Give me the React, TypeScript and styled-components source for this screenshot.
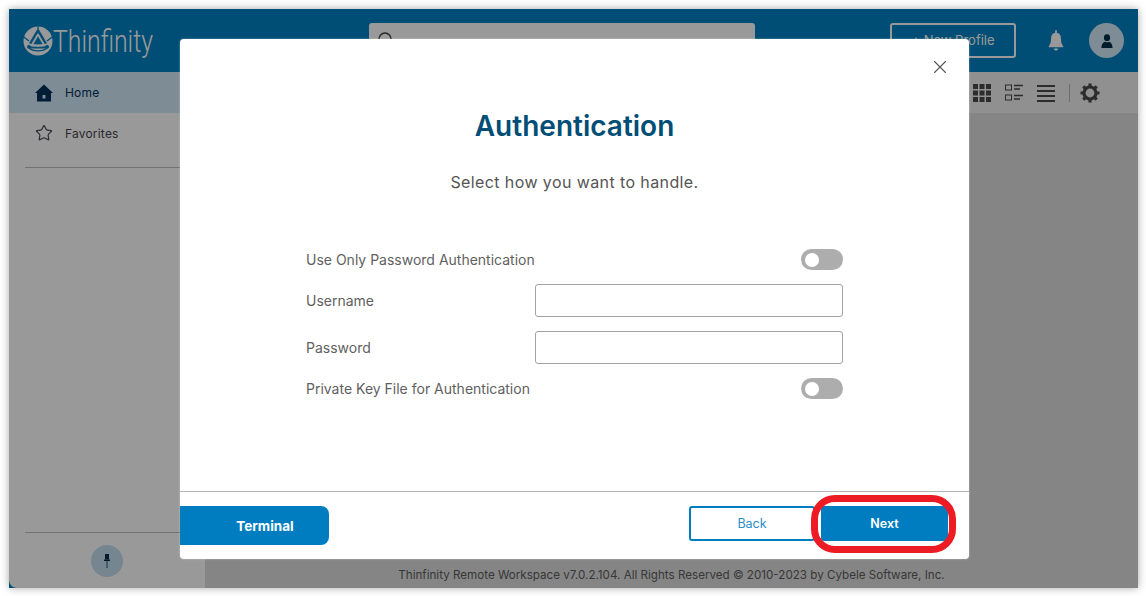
import React from 'react'
import styled, { createGlobalStyle } from 'styled-components'
import { Star, X } from 'lucide-react'

const GlobalStyle = createGlobalStyle`
  html, body {
    margin: 0;
    padding: 0;
    background: #fff;
    font-family: Inter, "Liberation Sans", sans-serif;
  }
  * {
    box-sizing: border-box;
  }
`

const Page = styled.div`
  width: 1146px;
  height: 596px;
  padding: 9px 8px 8px 9px;
  overflow: hidden;
`

const Window = styled.div`
  position: relative;
  display: flex;
  flex-direction: column;
  height: 579px;
  background: #0082c3;
  box-shadow: 0 0 8px rgba(0, 0, 0, 0.35);
  overflow: hidden;
`

const Header = styled.header`
  display: flex;
  align-items: center;
  flex: 0 0 63px;
  padding: 0 13px 0 14px;
  background: #0082c3;
`

const Brand = styled.div`
  display: flex;
  align-items: center;
  width: 346px;
  color: #fff;
`

const BrandName = styled.span`
  display: inline-block;
  font-family: Roboto, sans-serif;
  font-size: 32px;
  font-weight: 300;
  line-height: 36px;
  transform: scaleX(0.775);
  transform-origin: left center;
`

const Search = styled.div`
  display: flex;
  align-items: center;
  width: 386px;
  height: 34px;
  padding: 0 8px;
  margin-bottom: 1px;
  background: #fff;
  border-radius: 3px;
  color: #444;
`

const NewProfile = styled.button`
  width: 126px;
  height: 35px;
  margin-left: 135px;
  margin-top: -1px;
  background: none;
  border: 2px solid #fff;
  border-radius: 3px;
  color: #fff;
  font-family: inherit;
  font-size: 13px;
`

const Bell = styled.div`
  display: flex;
  margin-left: 32px;
  color: #fff;
`

const Avatar = styled.div`
  display: flex;
  align-items: center;
  justify-content: center;
  width: 35px;
  height: 35px;
  margin-left: 25px;
  border-radius: 50%;
  background: #d2e9fa;
  color: #00304a;
`

const Body = styled.div`
  display: flex;
  flex: 1;
  min-height: 0;
`

const Sidebar = styled.aside`
  display: flex;
  flex-direction: column;
  width: 196px;
  background: #fff;
  border-bottom-left-radius: 8px;
`

const NavItem = styled.div<{ active?: boolean }>`
  display: flex;
  align-items: center;
  gap: 12px;
  height: ${({ active }) => (active ? '41px' : '40px')};
  padding-left: 26px;
  background: ${({ active }) => (active ? '#d2e9fa' : 'transparent')};
  color: ${({ active }) => (active ? '#04325a' : '#4b4450')};
  font-size: 12px;
  letter-spacing: 0.2px;
`

const Divider = styled.hr<{ bottom?: boolean }>`
  width: 171px;
  margin: ${({ bottom }) => (bottom ? 'auto 0 12px 16px' : '14px 0 0 16px')};
  border: none;
  border-top: 1px solid #bdbdbd;
`

const PinButton = styled.div`
  display: flex;
  align-items: center;
  justify-content: center;
  align-self: center;
  width: 32px;
  height: 32px;
  margin: 0 0 11px;
  border-radius: 50%;
  background: #c4dff2;
  color: #00304a;
`

const Main = styled.main`
  display: flex;
  flex-direction: column;
  flex: 1;
  background: #dedede;
`

const Toolbar = styled.div`
  display: flex;
  align-items: center;
  justify-content: flex-end;
  gap: 14px;
  height: 41px;
  padding-right: 38px;
  background: #f0f0f0;
  color: #4a4a4a;
`

const ToolbarSeparator = styled.span`
  width: 1px;
  height: 18px;
  margin-right: -4px;
  background: #b5b5b5;
`

const Footer = styled.div`
  margin-top: auto;
  padding-bottom: 5px;
  text-align: center;
  color: #5d5d5d;
  font-size: 11.64px;
  line-height: 16px;
`

const Overlay = styled.div`
  position: absolute;
  inset: 0;
  display: flex;
  justify-content: center;
  padding: 30px 0 29px 2px;
  background: rgba(0, 0, 0, 0.4);
`

const Modal = styled.section`
  position: relative;
  display: flex;
  flex-direction: column;
  width: 789px;
  height: 520px;
  background: #fff;
  border-radius: 4px;
  box-shadow: 0 0 2px rgba(255, 255, 255, 0.5);
`

const CloseButton = styled.div`
  position: absolute;
  top: 17px;
  right: 18px;
  display: flex;
  color: #555;
`

const ModalBody = styled.div`
  flex: 1;
  padding-top: 70px;
  text-align: center;
`

const Title = styled.h1`
  margin: 0;
  color: #004e75;
  font-size: 28px;
  font-weight: 600;
  line-height: 34px;
`

const Subtitle = styled.p`
  margin: 29px 0 0;
  color: #555;
  font-size: 16px;
  letter-spacing: 0.4px;
  line-height: 20px;
`

const Form = styled.div`
  display: flex;
  flex-direction: column;
  gap: 14px;
  width: 537px;
  margin: 57px 0 0 126px;
  text-align: left;
`

const Row = styled.div`
  display: flex;
  align-items: center;
  justify-content: space-between;
  color: #5f5f5f;
  font-size: 14px;
`

const TextInput = styled.input`
  width: 308px;
  height: 33px;
  background: #fff;
  border: 1px solid #a3a3a3;
  border-radius: 3px;
  outline: none;
`

const Toggle = styled.span`
  display: flex;
  align-items: center;
  width: 42px;
  height: 21px;
  padding-left: 4px;
  border-radius: 11px;
  background: #adadad;

  &::before {
    content: '';
    width: 14px;
    height: 14px;
    border-radius: 50%;
    background: #fff;
  }
`

const ModalFooter = styled.div`
  display: flex;
  align-items: flex-start;
  flex: 0 0 68px;
  padding: 14px 21px 0 0;
  border-top: 1px solid #b3b3b3;
`

const Terminal = styled.button`
  width: 149px;
  height: 39px;
  margin-right: auto;
  padding: 0 0 0 21px;
  background: #007dc1;
  border: none;
  border-radius: 0 8px 8px 0;
  color: #fff;
  font-family: inherit;
  font-size: 13.5px;
  font-weight: 700;
`

const ActionButton = styled.button<{ primary?: boolean }>`
  width: ${({ primary }) => (primary ? '127px' : '126px')};
  height: 35px;
  margin-left: ${({ primary }) => (primary ? '6px' : '0')};
  background: ${({ primary }) => (primary ? '#007dc1' : '#fff')};
  border: 2px solid #007dc1;
  border-radius: 3px;
  color: ${({ primary }) => (primary ? '#fff' : '#2b8cc8')};
  font-family: inherit;
  font-size: 12.5px;
  font-weight: ${({ primary }) => (primary ? 600 : 400)};
`

const Highlight = styled.div`
  position: absolute;
  left: 631px;
  top: 456px;
  width: 145px;
  height: 58px;
  border: 7px solid #ed1c24;
  border-radius: 24px;
`

function LogoMark() {
  return (
    <svg width="30" height="30" viewBox="0 0 30 30" fill="none">
      <circle cx="15" cy="15" r="14.5" fill="currentColor" />
      <path d="M15 5 L24.5 21 H5.5 Z" fill="#0082c3" stroke="#0082c3" strokeWidth="3" strokeLinejoin="round" />
      <path d="M15 8.5 L21.5 19.5 H8.5 Z" stroke="currentColor" strokeWidth="1.8" strokeLinejoin="round" />
      <path d="M4 17.5 C10 20.5 20 20.5 26 17.5" stroke="currentColor" strokeWidth="1.8" />
      <path d="M5.5 21.5 C10 26 20 26 24.5 21.5" stroke="#0082c3" strokeWidth="1.4" />
      <path d="M15 0.5 V5 M0.8 11 L6 15 M29.2 11 L24 15" stroke="#0082c3" strokeWidth="1.3" />
    </svg>
  )
}

function SearchIcon() {
  return (
    <svg width="18" height="18" viewBox="0 0 18 18" fill="none" stroke="currentColor" strokeWidth="1.5">
      <circle cx="8" cy="8" r="6" />
      <path d="M12.5 12.5 L17 17" />
    </svg>
  )
}

function BellIcon() {
  return (
    <svg width="16" height="21" viewBox="0 0 18 22" fill="currentColor" preserveAspectRatio="none">
      <rect x="8" y="0" width="2" height="4" rx="1" />
      <path d="M9 3 C5 3 3.4 6 3.4 9.5 C3.4 13 2.6 15 1 16.8 V18 H17 V16.8 C15.4 15 14.6 13 14.6 9.5 C14.6 6 13 3 9 3 Z" />
      <path d="M6.5 19.4 H11.5 C11.2 20.8 10.2 21.5 9 21.5 C7.8 21.5 6.8 20.8 6.5 19.4 Z" />
    </svg>
  )
}

function UserIcon() {
  return (
    <svg width="12" height="14" viewBox="0 0 14 15" fill="currentColor" preserveAspectRatio="none">
      <circle cx="7" cy="4" r="3.6" />
      <path d="M0.5 15 C0.5 10.5 3 8.4 4.6 8.2 C6 9 8 9 9.4 8.2 C11 8.4 13.5 10.5 13.5 15 Z" />
    </svg>
  )
}

function HomeIcon() {
  return (
    <svg width="18" height="18" viewBox="0 0 18 18" fill="currentColor">
      <path fillRule="evenodd" d="M9 0.5 L18 9 L16 9 V17.5 H2 V9 L0 9 Z M7.5 11 V14.5 H10.5 V11 Z" />
    </svg>
  )
}

function PinIcon() {
  return (
    <svg width="6" height="14" viewBox="0 0 6 14" fill="currentColor">
      <rect x="1" y="0" width="4" height="5.5" />
      <rect x="0" y="5.5" width="6" height="1.5" />
      <rect x="2.6" y="7" width="0.8" height="7" />
    </svg>
  )
}

function GridIcon() {
  return (
    <svg width="18" height="18" viewBox="0 0 18 18" fill="currentColor">
      {[0, 6.5, 13].map((y) =>
        [0, 6.5, 13].map((x) => <rect key={`${x}-${y}`} x={x} y={y} width="5" height="5" />)
      )}
    </svg>
  )
}

function DetailIcon() {
  return (
    <svg width="18" height="18" viewBox="0 0 18 18">
      <rect x="0.5" y="1" width="6" height="5" fill="none" stroke="currentColor" />
      <rect x="0.5" y="11" width="6" height="5" fill="none" stroke="currentColor" />
      <path d="M9 1.5 H18 M9 5 H15 M9 11.5 H18 M9 15 H15" stroke="currentColor" strokeWidth="1.6" />
    </svg>
  )
}

function LinesIcon() {
  return (
    <svg width="18" height="18" viewBox="0 0 18 18" fill="currentColor">
      <rect y="1" width="18" height="2" />
      <rect y="6" width="18" height="2" />
      <rect y="11" width="18" height="2" />
      <rect y="16" width="18" height="2" />
    </svg>
  )
}

function GearIcon() {
  return (
    <svg width="20" height="20" viewBox="0 0 20 20" fill="none" stroke="currentColor">
      <circle cx="10" cy="10" r="6" strokeWidth="3.2" />
      <path
        d="M10 0.5 V4 M10 16 V19.5 M0.5 10 H4 M16 10 H19.5 M3.3 3.3 L5.8 5.8 M14.2 14.2 L16.7 16.7 M3.3 16.7 L5.8 14.2 M14.2 5.8 L16.7 3.3"
        strokeWidth="3.2"
      />
    </svg>
  )
}

export default function App() {
  return (
    <Page>
      <GlobalStyle />
      <Window>
        <Header>
          <Brand>
            <LogoMark />
            <BrandName>Thinfinity</BrandName>
          </Brand>
          <Search>
            <SearchIcon />
          </Search>
          <NewProfile>+ New Profile</NewProfile>
          <Bell>
            <BellIcon />
          </Bell>
          <Avatar>
            <UserIcon />
          </Avatar>
        </Header>
        <Body>
          <Sidebar>
            <NavItem active>
              <HomeIcon />
              Home
            </NavItem>
            <NavItem>
              <Star size={18} strokeWidth={1.6} />
              Favorites
            </NavItem>
            <Divider />
            <Divider bottom />
            <PinButton>
              <PinIcon />
            </PinButton>
          </Sidebar>
          <Main>
            <Toolbar>
              <GridIcon />
              <DetailIcon />
              <LinesIcon />
              <ToolbarSeparator />
              <GearIcon />
            </Toolbar>
            <Footer>Thinfinity Remote Workspace v7.0.2.104. All Rights Reserved © 2010-2023 by Cybele Software, Inc.</Footer>
          </Main>
        </Body>
        <Overlay>
          <Modal>
            <CloseButton>
              <X size={22} strokeWidth={1.2} />
            </CloseButton>
            <ModalBody>
              <Title>Authentication</Title>
              <Subtitle>Select how you want to handle.</Subtitle>
              <Form>
                <Row>
                  Use Only Password Authentication
                  <Toggle />
                </Row>
                <Row>
                  Username
                  <TextInput />
                </Row>
                <Row>
                  Password
                  <TextInput type="password" />
                </Row>
                <Row>
                  Private Key File for Authentication
                  <Toggle />
                </Row>
              </Form>
            </ModalBody>
            <ModalFooter>
              <Terminal>Terminal</Terminal>
              <ActionButton>Back</ActionButton>
              <ActionButton primary>Next</ActionButton>
            </ModalFooter>
            <Highlight />
          </Modal>
        </Overlay>
      </Window>
    </Page>
  )
}
